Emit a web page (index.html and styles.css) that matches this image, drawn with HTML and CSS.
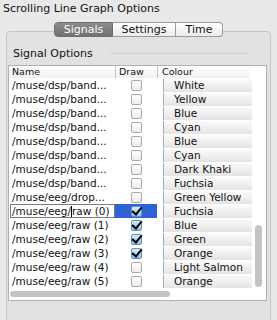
FILE: index.html
```html
<!DOCTYPE html>
<html lang="en">
<head>
    <meta charset="UTF-8">
    <title>Scrolling Line Graph Options</title>
    <link rel="stylesheet" href="styles.css">
</head>
<body>
    <div class="title">Scrolling Line Graph Options</div>
    <div class="tabs">
        <div class="tab tab-signals active">Signals</div>
        <div class="tab tab-settings">Settings</div>
        <div class="tab tab-time">Time</div>
    </div>
    <div class="group">
        <div class="legend"><span>Signal Options</span><div class="legend-line"></div></div>
        <div class="table">
            <div class="row head">
                <div class="cell name">Name</div>
                <div class="cell draw">Draw</div>
                <div class="cell colour">Colour</div>
            </div>
            <div class="row"><div class="cell name">/muse/dsp/band...</div><div class="cell draw"><span class="check"></span></div><div class="cell colour"><span class="bar">White</span></div></div>
            <div class="row"><div class="cell name">/muse/dsp/band...</div><div class="cell draw"><span class="check"></span></div><div class="cell colour"><span class="bar">Yellow</span></div></div>
            <div class="row"><div class="cell name">/muse/dsp/band...</div><div class="cell draw"><span class="check"></span></div><div class="cell colour"><span class="bar">Blue</span></div></div>
            <div class="row"><div class="cell name">/muse/dsp/band...</div><div class="cell draw"><span class="check"></span></div><div class="cell colour"><span class="bar">Cyan</span></div></div>
            <div class="row"><div class="cell name">/muse/dsp/band...</div><div class="cell draw"><span class="check"></span></div><div class="cell colour"><span class="bar">Blue</span></div></div>
            <div class="row"><div class="cell name">/muse/dsp/band...</div><div class="cell draw"><span class="check"></span></div><div class="cell colour"><span class="bar">Cyan</span></div></div>
            <div class="row"><div class="cell name">/muse/dsp/band...</div><div class="cell draw"><span class="check"></span></div><div class="cell colour"><span class="bar">Dark Khaki</span></div></div>
            <div class="row"><div class="cell name">/muse/dsp/band...</div><div class="cell draw"><span class="check"></span></div><div class="cell colour"><span class="bar">Fuchsia</span></div></div>
            <div class="row"><div class="cell name">/muse/eeg/drop...</div><div class="cell draw"><span class="check"></span></div><div class="cell colour"><span class="bar">Green Yellow</span></div></div>
            <div class="row editing"><div class="cell name"><span class="edit">/muse/eeg/<i class="caret"></i>raw (0)</span></div><div class="cell draw selected"><span class="check on"></span></div><div class="cell colour"><span class="bar">Fuchsia</span></div></div>
            <div class="row"><div class="cell name">/muse/eeg/raw (1)</div><div class="cell draw"><span class="check on"></span></div><div class="cell colour"><span class="bar">Blue</span></div></div>
            <div class="row"><div class="cell name">/muse/eeg/raw (2)</div><div class="cell draw"><span class="check on"></span></div><div class="cell colour"><span class="bar">Green</span></div></div>
            <div class="row"><div class="cell name">/muse/eeg/raw (3)</div><div class="cell draw"><span class="check on"></span></div><div class="cell colour"><span class="bar">Orange</span></div></div>
            <div class="row"><div class="cell name">/muse/eeg/raw (4)</div><div class="cell draw"><span class="check"></span></div><div class="cell colour"><span class="bar">Light Salmon</span></div></div>
            <div class="row"><div class="cell name">/muse/eeg/raw (5)</div><div class="cell draw"><span class="check"></span></div><div class="cell colour"><span class="bar">Orange</span></div></div>
            <div class="hscroll"><div class="hthumb"></div></div>
            <div class="vthumb"></div>
        </div>
    </div>
</body>
</html>
```

FILE: styles.css
```css
html, body {
    margin: 0;
    height: 100%;
}
body {
    font-family: "DejaVu Sans", sans-serif;
    font-size: 10.5px;
    color: #111;
    background-color: #e9e9e9;
    overflow: hidden;
}
.title {
    height: 18px;
    line-height: 18px;
    padding-left: 3px;
    font-size: 11px;
}
.tabs {
    display: flex;
    margin: 4px 0 -6px 54px;
    height: 15px;
    position: relative;
    z-index: 1;
}
.tab {
    height: 13px;
    line-height: 13px;
    text-align: center;
    font-size: 11px;
    border: 1px solid #9c9c9c;
    border-left: none;
    background: linear-gradient(#ffffff, #ececec);
}
.tab-signals {
    width: 57px;
    border-left: 1px solid #7a7a7a;
    border-radius: 4px 0 0 4px;
}
.tab-settings {
    width: 62px;
}
.tab-time {
    width: 46px;
    border-radius: 0 4px 4px 0;
}
.tab.active {
    color: white;
    border-color: #6e6e6e;
    background: linear-gradient(#8c8c8c, #727272);
}
.group {
    margin: 0 6px;
    height: 300px;
    border: 1px solid #c6c6c6;
    border-radius: 4px;
    background-color: #e2e2e2;
    padding: 14px 3px 0 1px;
}
.legend {
    display: flex;
    align-items: center;
    height: 14px;
    margin-bottom: 5px;
    padding-left: 5px;
    font-size: 11px;
}
.legend-line {
    width: 137px;
    height: 1px;
    margin-left: auto;
    margin-right: 20px;
    background-color: #cfcfcf;
}
.table {
    position: relative;
    background: white;
    border: 1px solid #b0b0b0;
    height: 234px;
}
.row {
    display: grid;
    grid-template-columns: 106px 42px 95px;
    height: 14px;
    line-height: 14px;
}
.row.head {
    height: 12px;
    line-height: 12px;
    font-size: 9.5px;
    background: linear-gradient(#ffffff, #f0f0f0);
    width: 241px;
}
.head .cell {
    padding-left: 3px;
}
.head .draw, .head .colour {
    border-left: 1px solid #c4c4c4;
}
.cell {
    white-space: nowrap;
    overflow: hidden;
}
.name {
    padding-left: 3px;
}
.draw {
    display: flex;
    justify-content: center;
    align-items: center;
}
.head .draw {
    display: block;
}
.check {
    width: 9px;
    height: 9px;
    border: 1px solid #a9a9a9;
    border-radius: 2px;
    background: linear-gradient(#ffffff, #ececec);
    position: relative;
}
.check.on {
    border-color: #6d8fb8;
    background: linear-gradient(#d6ebfd, #8ac2f2);
}
.check.on::after {
    content: "";
    position: absolute;
    left: 2px;
    top: -2px;
    width: 4px;
    height: 8px;
    border: solid #000;
    border-width: 0 2px 2px 0;
    transform: rotate(40deg);
}
.colour {
    padding-left: 6px;
}
.head .colour {
    padding-left: 4px;
}
.bar {
    display: block;
    height: 13px;
    line-height: 13px;
    margin-top: 1px;
    padding-left: 10px;
    border-left: 1px solid #a8a8a8;
    background: linear-gradient(#fbfbfb, #e4e4e4);
}
.selected {
    background-color: #2f62d4;
}
.editing .name {
    padding-left: 1px;
}
.edit {
    display: block;
    height: 12px;
    line-height: 12px;
    padding-left: 1px;
    border: 1px solid #7d7d7d;
    background: white;
}
.caret {
    display: inline-block;
    width: 1px;
    height: 11px;
    vertical-align: -2px;
    background: #000;
}
.hscroll {
    height: 11px;
    padding: 3px 0 0 1px;
}
.hthumb {
    width: 160px;
    height: 6px;
    border-radius: 3px;
    background-color: #c3c3c3;
}
.vthumb {
    position: absolute;
    left: 246px;
    top: 159px;
    width: 7px;
    height: 62px;
    border-radius: 4px;
    background-color: #c3c3c3;
}
```
